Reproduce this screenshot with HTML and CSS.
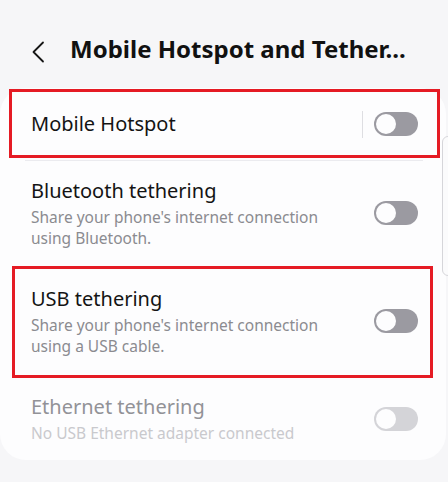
FILE: index.html
```html
<!DOCTYPE html>
<html lang="en">
<head>
<meta charset="utf-8">
<title>Mobile Hotspot and Tethering</title>
<link rel="stylesheet" href="styles.css">
</head>
<body>
<header class="appbar">
  <button class="back" aria-label="Back">
    <svg width="14" height="22" viewBox="0 0 14 22"><path d="M12 1.5 L2.5 11 L12 20.5" fill="none" stroke="#161616" stroke-width="1.8" stroke-linecap="round" stroke-linejoin="round"/></svg>
  </button>
  <h1 class="title">Mobile Hotspot and Tether...</h1>
</header>

<main class="card">
  <div class="row hotspot">
    <span class="label">Mobile Hotspot</span>
    <span class="vsep"></span>
    <span class="switch"><span class="knob"></span></span>
  </div>
  <div class="divider"></div>

  <div class="row first">
    <div class="text">
      <div class="label">Bluetooth tethering</div>
      <div class="sub">Share your phone's internet connection<br>using Bluetooth.</div>
    </div>
    <span class="switch"><span class="knob"></span></span>
  </div>

  <div class="row">
    <div class="text">
      <div class="label">USB tethering</div>
      <div class="sub">Share your phone's internet connection<br>using a USB cable.</div>
    </div>
    <span class="switch"><span class="knob"></span></span>
  </div>

  <div class="row disabled last">
    <div class="text">
      <div class="label">Ethernet tethering</div>
      <div class="sub">No USB Ethernet adapter connected</div>
    </div>
    <span class="switch"><span class="knob"></span></span>
  </div>

  <span class="mark mark-hotspot"></span>
  <span class="mark mark-usb"></span>
</main>

<span class="scroll-thumb"></span>
</body>
</html>
```
FILE: styles.css
```css
* { box-sizing: border-box; }

html, body {
  margin: 0;
  height: 100%;
  overflow: hidden;
}

body {
  background: #f6f6f8;
  font-family: "Noto Sans", "Roboto", sans-serif;
  color: #141414;
  position: relative;
}

/* top app bar */
.appbar {
  display: flex;
  align-items: flex-start;
  padding: 33px 0 0 31px;
  height: 88px;
}

.back {
  border: 0;
  background: none;
  padding: 0;
  margin-top: 8px;
  width: 14px;
  height: 22px;
  display: block;
}
.back svg { display: block; }

.title {
  margin: 0 0 0 25px;
  font-size: 24px;
  font-weight: 700;
  line-height: 32px;
  color: #111;
  white-space: nowrap;
}

/* settings card */
.card {
  position: relative;
  width: 446px;
  background: #fdfdfe;
  border-radius: 26px;
  padding: 0 28px 0 31px;
}

.row {
  display: flex;
  align-items: center;
  justify-content: space-between;
  padding: 18px 0;
}
.row.first { padding-top: 16px; }
.row.last { padding-bottom: 16px; }

.row.hotspot {
  height: 72px;
  padding: 0;
}
.hotspot .label { flex: 1; }

.label {
  font-size: 20px;
  line-height: 28px;
  color: #141414;
}

.sub {
  margin-top: 1.5px;
  font-size: 15.5px;
  line-height: 21.3px;
  color: #8b8b90;
}

.vsep {
  width: 1px;
  height: 27px;
  background: #dedee2;
  margin-right: 11px;
}

.divider {
  height: 1px;
  background: #ebebef;
  margin: 0 -5px 0 -6px;
}

/* toggle switch, off state */
.switch {
  position: relative;
  flex: none;
  width: 44px;
  height: 24px;
  border-radius: 12px;
  background: #9b9aa1;
}
.switch .knob {
  position: absolute;
  left: 2px;
  top: 2px;
  width: 20px;
  height: 20px;
  border-radius: 50%;
  background: #fdfdfe;
}

.disabled .label { color: #929297; }
.disabled .sub { color: #c9c9cd; }
.disabled .switch { background: #d4d4d8; }

/* red highlight outlines drawn over rows */
.mark {
  position: absolute;
  border: 3px solid #e51b24;
  pointer-events: none;
}
.mark-hotspot { left: 9px; top: 1px; width: 431px; height: 69px; }
.mark-usb { left: 12px; top: 178px; width: 421px; height: 112px; }

/* scroll indicator at the right edge */
.scroll-thumb {
  position: absolute;
  left: 442px;
  top: 136px;
  width: 14px;
  height: 140px;
  border: 1px solid #d6d6da;
  border-radius: 6px;
  background: #fbfbfc;
}
```
